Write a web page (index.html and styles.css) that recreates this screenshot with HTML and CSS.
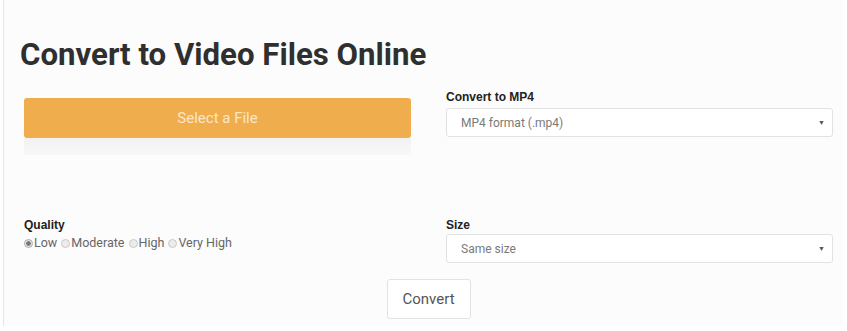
FILE: index.html
```html
<!DOCTYPE html>
<html lang="en">
<head>
    <meta charset="UTF-8">
    <meta name="viewport" content="width=device-width, initial-scale=1.0">
    <title>Convert to Video Files Online</title>
    <link rel="stylesheet" href="styles.css">
</head>
<body>
    <div class="frame">
        <h1 class="title">Convert to Video Files Online</h1>

        <div class="row row-top">
            <div class="col">
                <button class="select-file">Select a File</button>
                <div class="upload-track"></div>
            </div>
            <div class="col">
                <label class="field-label">Convert to MP4</label>
                <div class="select">
                    <span>MP4 format (.mp4)</span>
                    <span class="arrow">&#9660;</span>
                </div>
            </div>
        </div>

        <div class="row row-bottom">
            <div class="col">
                <label class="field-label">Quality</label>
                <div class="radios">
                    <span class="radio checked"></span><span class="radio-text">Low</span>
                    <span class="radio"></span><span class="radio-text">Moderate</span>
                    <span class="radio"></span><span class="radio-text">High</span>
                    <span class="radio"></span><span class="radio-text">Very High</span>
                </div>
            </div>
            <div class="col">
                <label class="field-label">Size</label>
                <div class="select">
                    <span>Same size</span>
                    <span class="arrow">&#9660;</span>
                </div>
            </div>
        </div>

        <div class="actions">
            <button class="convert">Convert</button>
        </div>
    </div>
</body>
</html>
```

FILE: styles.css
```css
* {
    margin: 0;
    padding: 0;
    box-sizing: border-box;
}

body {
    background-color: #ffffff;
    font-family: 'Liberation Sans', Arial, sans-serif;
    color: #333;
}

.frame {
    margin-left: 3px;
    width: 840px;
    height: 326px;
    border-left: 1px solid #e6e6e6;
    background-color: #fcfcfc;
    padding: 37px 0 0 20px;
}

.title {
    font-family: Roboto, sans-serif;
    font-size: 31.2px;
    font-weight: 700;
    color: #2f2f2f;
    line-height: 36px;
    margin-left: -4px;
}

.row {
    display: grid;
    grid-template-columns: 387px 387px;
    column-gap: 35px;
}

.row-top {
    margin-top: 17px;
}

.row-top .col:first-child {
    padding-top: 8px;
}

.select-file {
    display: block;
    width: 387px;
    height: 40px;
    border: none;
    border-radius: 3px;
    background-color: #f0ad4e;
    color: #fce6c6;
    font-family: Roboto, sans-serif;
    font-size: 15px;
    cursor: pointer;
}

.upload-track {
    height: 17px;
    background: linear-gradient(#f2f2f2, #f8f8f8);
}

.field-label {
    display: block;
    font-size: 12px;
    font-weight: 700;
    color: #222;
    line-height: 15px;
    margin-bottom: 3px;
}

.select {
    display: flex;
    justify-content: space-between;
    align-items: center;
    height: 29px;
    border: 1px solid #e2e2e2;
    border-radius: 3px;
    background-color: #fff;
    padding: 0 7px 0 14px;
    font-family: Roboto, sans-serif;
    font-size: 12px;
    color: #7a7a7a;
}

.arrow {
    font-size: 7px;
    color: #555;
}

.row-bottom {
    margin-top: 63px;
}

.row-bottom .field-label {
    margin-bottom: 1px;
}

.radios {
    display: flex;
    align-items: center;
    font-family: Roboto, sans-serif;
    font-size: 12.5px;
    color: #666;
    line-height: 16px;
    margin-top: 2px;
}

.radio {
    width: 9px;
    height: 9px;
    border-radius: 50%;
    border: 1px solid #c8c8c8;
    background-color: #ececec;
    margin-right: 1px;
}

.radio.checked {
    background: radial-gradient(circle, #777 0 2px, #e4e4e4 2.5px);
    border-color: #aaa;
}

.radio-text {
    margin-right: 4px;
}

.actions {
    display: flex;
    justify-content: center;
    margin-top: 16px;
    padding-right: 10px;
}

.convert {
    width: 84px;
    height: 40px;
    background-color: #fff;
    border: 1px solid #e2e2e2;
    border-radius: 3px;
    font-family: Roboto, sans-serif;
    font-size: 15px;
    color: #555;
    cursor: pointer;
}
```
